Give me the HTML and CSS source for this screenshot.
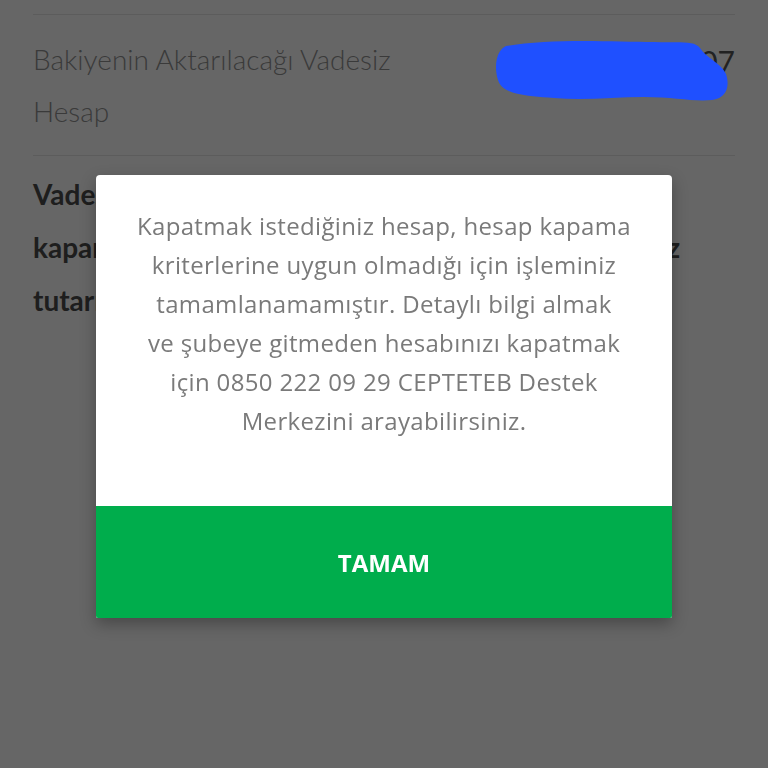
FILE: index.html
```html
<!DOCTYPE html>
<html lang="tr">
<head>
<meta charset="utf-8">
<link rel="stylesheet" href="styles.css">
</head>
<body>
<div class="page">
  <div class="divider"></div>
  <div class="row">
    <div class="label">Bakiyenin Aktarılacağı Vadesiz<br>Hesap</div>
    <div class="value">0000 0000 07</div>
  </div>
  <div class="divider"></div>
  <div class="note">
    <span class="line">Vadesiz hesabınızı kapatmak için hesap</span>
    <span class="line just">kapama kriterlerine uygun olmalıdır. Bakiyeniz</span>
    <span class="line">tutarı vadesiz hesabınıza aktarılacaktır.</span>
  </div>
</div>
<div class="overlay"></div>
<svg class="scribble" width="236" height="68" viewBox="0 0 236 68">
  <path d="M12 8 C60 0 120 4 160 4 C185 5 200 2 206 10 C212 20 226 24 232 36 C236 48 233 60 218 62 C200 64 180 59 150 59 C120 59 90 63 60 60 C30 58 8 56 4 42 C0 28 2 13 12 8 Z" fill="#1f50ff"/>
</svg>
<div class="dialog">
  <p class="message">Kapatmak istediğiniz hesap, hesap kapama<br>kriterlerine uygun olmadığı için işleminiz<br>tamamlanamamıştır. Detaylı bilgi almak<br>ve şubeye gitmeden hesabınızı kapatmak<br>için 0850 222 09 29 CEPTETEB Destek<br>Merkezini arayabilirsiniz.</p>
  <button class="ok">TAMAM</button>
</div>
</body>
</html>
```
FILE: styles.css
```css
html, body {
  margin: 0;
  padding: 0;
  width: 768px;
  height: 768px;
  overflow: hidden;
  background: #ffffff;
  font-family: "Lato", "Noto Sans", sans-serif;
}
.page {
  padding: 14px 33px 0;
}
.divider {
  height: 1px;
  background: #e6e6e6;
}
.row {
  display: flex;
  justify-content: space-between;
  padding: 18px 0;
}
.label {
  font-size: 28px;
  line-height: 52px;
  color: #929292;
  font-weight: 300;
}
.value {
  font-size: 30px;
  line-height: 52px;
  color: #555;
  margin-top: 2px;
  white-space: nowrap;
}
.note {
  margin: 12px 0 0;
  font-size: 28px;
  line-height: 53px;
  font-weight: 700;
  color: #4b4b4b;
  width: 647px;
  display: flex;
  flex-direction: column;
}
.line {
  white-space: nowrap;
}
.just {
  white-space: normal;
  text-align: justify;
  text-align-last: justify;
}
.overlay {
  position: fixed;
  inset: 0;
  background: rgba(0, 0, 0, 0.6);
}
.scribble {
  position: absolute;
  left: 494px;
  top: 38px;
}
.dialog {
  position: absolute;
  left: 96px;
  top: 175px;
  width: 576px;
  background: #fff;
  border-radius: 4px 4px 2px 2px;
  overflow: hidden;
  box-shadow: 0 6px 16px rgba(0, 0, 0, 0.3);
  display: flex;
  flex-direction: column;
}
.message {
  margin: 0;
  padding: 31px 10px 0;
  height: 331px;
  box-sizing: border-box;
  text-align: center;
  font-family: "Open Sans", "Noto Sans", sans-serif;
  font-size: 24px;
  letter-spacing: 0.35px;
  line-height: 39px;
  color: #7a7a7a;
  white-space: nowrap;
}
.ok {
  height: 112px;
  border: 0;
  margin: 0;
  padding: 0;
  background: #00ad4c;
  color: #fff;
  font-family: "Open Sans", sans-serif;
  font-weight: 700;
  font-size: 24px;
}
```
